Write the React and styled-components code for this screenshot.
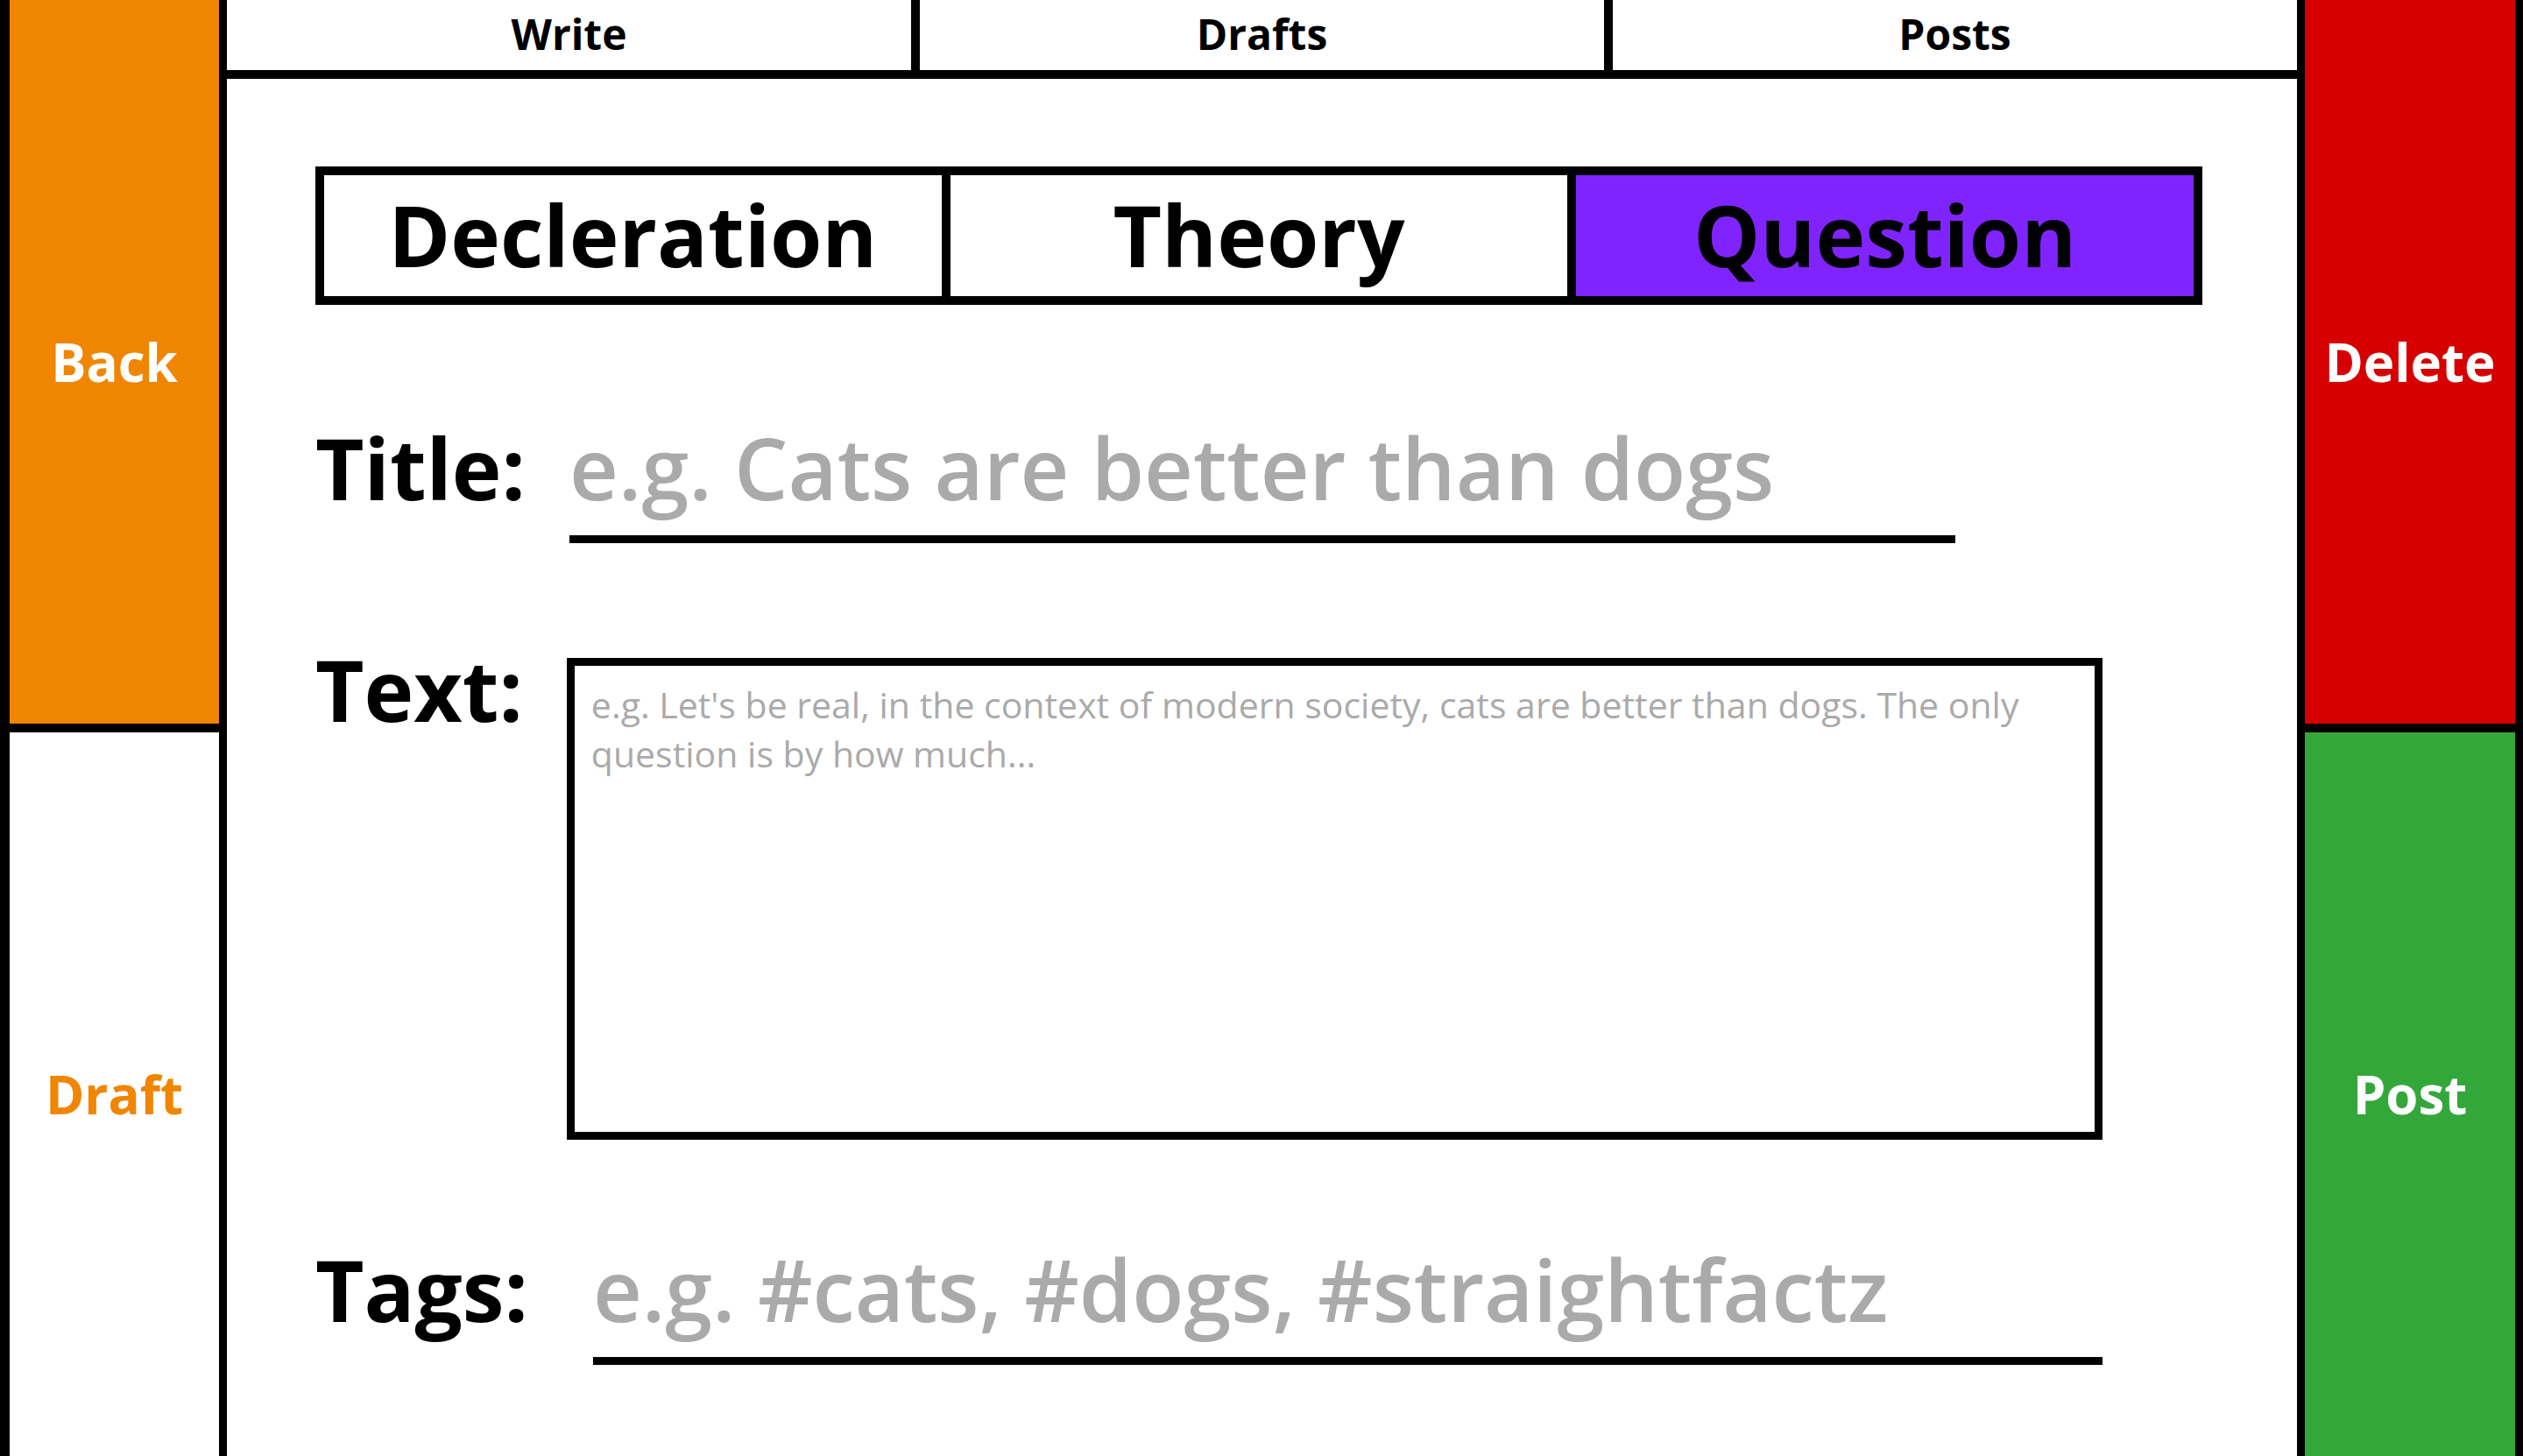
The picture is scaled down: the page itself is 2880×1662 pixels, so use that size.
import React from "react"
import styled, { createGlobalStyle } from "styled-components"

const GlobalStyle = createGlobalStyle`
  * {
    box-sizing: border-box;
  }
  html,
  body {
    margin: 0;
    padding: 0;
    background: #fff;
  }
  body {
    font-family: "Open Sans", "Noto Sans", sans-serif;
  }
`

const Page = styled.div`
  display: flex;
  width: 100vw;
  height: 100vh;
  overflow: hidden;
`

const SideBar = styled.aside`
  display: flex;
  flex-direction: column;
  flex-shrink: 0;
  width: ${(p) => (p.$left ? "259px" : "258px")};
  border-left: ${(p) => (p.$left ? "11px" : "9px")} solid #000;
  border-right: 9px solid #000;
`

const SideButton = styled.button`
  flex: 1;
  display: flex;
  align-items: center;
  justify-content: center;
  border: none;
  padding: 0;
  background: ${(p) => p.$bg};
  color: ${(p) => p.$color};
  font-family: inherit;
  font-size: 60px;
  font-weight: 700;
  cursor: pointer;

  & + & {
    border-top: 10px solid #000;
  }
`

const Main = styled.main`
  flex: 1;
  min-width: 0;
  display: flex;
  flex-direction: column;
`

const Nav = styled.nav`
  display: flex;
  height: 90px;
  border-bottom: 10px solid #000;
`

const NavTab = styled.button`
  flex: 1;
  border: none;
  padding: 0 0 4px;
  background: #fff;
  color: #000;
  font-family: inherit;
  font-size: 48px;
  font-weight: 700;
  cursor: pointer;

  & + & {
    border-left: 10px solid #000;
  }
`

const Content = styled.div`
  padding: 100px 108px 0 101px;
`

const TypeTabs = styled.div`
  display: flex;
  height: 158px;
  border: 10px solid #000;
`

const TypeTab = styled.button`
  flex: 1;
  border: none;
  padding: 0 0 4px;
  background: ${(p) => (p.$active ? "#8024ff" : "#fff")};
  color: #000;
  font-family: inherit;
  font-size: 96px;
  font-weight: 700;
  cursor: pointer;

  & + & {
    border-left: 10px solid #000;
  }
`

const Form = styled.form`
  width: 2040px;
  display: flex;
  flex-direction: column;
`

const Row = styled.div`
  display: flex;
  align-items: ${(p) => (p.$top ? "flex-start" : "baseline")};
  gap: ${(p) => p.$gap}px;
  margin-top: ${(p) => p.$mt}px;
`

const Label = styled.label`
  flex-shrink: 0;
  font-size: 96px;
  font-weight: 700;
  line-height: 1;
  color: #000;
`

const LineInput = styled.input`
  ${(p) => (p.$width ? `width: ${p.$width}px;` : "flex: 1;")}
  min-width: 0;
  border: none;
  border-bottom: 9px solid #000;
  padding: 0 0 12px 0;
  outline: none;
  background: transparent;
  font-family: inherit;
  font-size: 97px;
  font-weight: 600;
  line-height: 1;
  color: #000;

  &::placeholder {
    color: #aaa;
    opacity: 1;
  }
`

const TextBox = styled.textarea`
  flex: 1;
  height: 550px;
  margin-top: 12px;
  border: 9px solid #000;
  border-radius: 0;
  padding: 16px 19px;
  resize: none;
  outline: none;
  font-family: inherit;
  font-size: 41px;
  font-weight: 500;
  line-height: 56px;
  color: #000;

  &::placeholder {
    color: #aaa;
    opacity: 1;
  }
`

export default function App() {
  return (
    <Page>
      <GlobalStyle />
      <SideBar $left>
        <SideButton $bg="#f08500" $color="#fff">Back</SideButton>
        <SideButton $bg="#fff" $color="#f08500">Draft</SideButton>
      </SideBar>

      <Main>
        <Nav>
          <NavTab>Write</NavTab>
          <NavTab>Drafts</NavTab>
          <NavTab>Posts</NavTab>
        </Nav>

        <Content>
          <TypeTabs>
            <TypeTab>Decleration</TypeTab>
            <TypeTab>Theory</TypeTab>
            <TypeTab $active>Question</TypeTab>
          </TypeTabs>

          <Form onSubmit={(e) => e.preventDefault()}>
            <Row $mt={119} $gap={50}>
              <Label htmlFor="title">Title:</Label>
              <LineInput
                id="title"
                $width={1582}
                placeholder="e.g. Cats are better than dogs"
              />
            </Row>
            <Row $mt={119} $gap={50} $top>
              <Label htmlFor="text">Text:</Label>
              <TextBox
                id="text"
                placeholder={
                  "e.g. Let's be real, in the context of modern society, cats are better than dogs. The only\nquestion is by how much..."
                }
              />
            </Row>
            <Row $mt={104} $gap={74}>
              <Label htmlFor="tags">Tags:</Label>
              <LineInput id="tags" placeholder="e.g. #cats, #dogs, #straightfactz" />
            </Row>
          </Form>
        </Content>
      </Main>

      <SideBar>
        <SideButton $bg="#d60000" $color="#fff">Delete</SideButton>
        <SideButton $bg="#34a73a" $color="#fff">Post</SideButton>
      </SideBar>
    </Page>
  )
}
